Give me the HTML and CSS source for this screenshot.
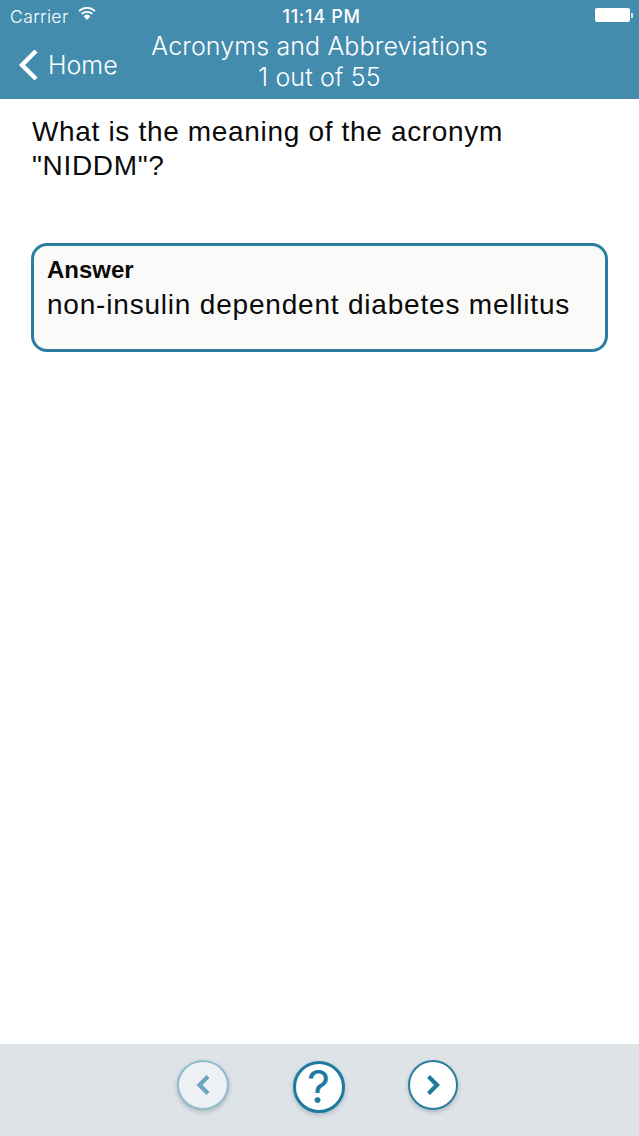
FILE: index.html
```html
<!DOCTYPE html>
<html lang="en">
<head>
<meta charset="utf-8">
<title>Acronyms and Abbreviations</title>
<link rel="stylesheet" href="styles.css">
</head>
<body>
<div class="app">
  <header class="header">
    <div class="status">
      <div class="status-left">
        <span>Carrier</span>
        <svg class="wifi" width="20" height="15" viewBox="0 0 20 14"><path d="M10 13.500 6.600 9.700a5 5 0 0 1 6.800 0Z" fill="#fff"/><path d="M4.600 7.400a8 8 0 0 1 10.800 0M2 4.600a11.800 11.800 0 0 1 16 0" fill="none" stroke="#fff" stroke-width="1.800"/></svg>
      </div>
      <div class="status-time">11:14 PM</div>
      <div class="battery"><span class="battery-body"></span><span class="battery-tip"></span></div>
    </div>
    <nav class="nav">
      <div class="back">
        <svg width="24" height="34" viewBox="0 0 24 34"><path d="M20 3 6 17l14 14" fill="none" stroke="#fff" stroke-width="4.400"/></svg>
        <span>Home</span>
      </div>
      <div class="title">Acronyms and Abbreviations<br>1 out of 55</div>
    </nav>
  </header>
  <main class="content">
    <p class="question">What is the meaning of the acronym "NIDDM"?</p>
    <section class="answer">
      <div class="answer-label">Answer</div>
      <div class="answer-text">non-insulin dependent diabetes mellitus</div>
    </section>
  </main>
  <footer class="toolbar">
    <button class="round prev"><svg width="20" height="24" viewBox="0 0 20 24"><path d="M15 3.500 6.500 12l8.500 8.500" fill="none" stroke="#6aa6bd" stroke-width="4.200"/></svg></button>
    <button class="round help">?</button>
    <button class="round next"><svg width="20" height="24" viewBox="0 0 20 24"><path d="M5.500 3.500 14 12l-8.500 8.500" fill="none" stroke="#1f7aa0" stroke-width="4.200"/></svg></button>
  </footer>
</div>
</body>
</html>
```
FILE: styles.css
```css
* { box-sizing: border-box; }
html, body { margin: 0; padding: 0; }
body { font-family: "Liberation Sans", Arial, sans-serif; background: #fff; }
.app { width: 639px; height: 1136px; display: flex; flex-direction: column; overflow: hidden; }

.header { height: 99px; background: #438cae; color: #fff; font-family: Inter, "Liberation Sans", sans-serif; flex: none; }
.status { height: 32px; display: grid; grid-template-columns: 1fr auto 1fr; align-items: center; padding: 0 6px 0 10px; }
.status-left { display: flex; align-items: center; gap: 8px; font-size: 17.500px; font-weight: 300; letter-spacing: .4px; }
.wifi { margin-top: -5px; }
.status-time { font-weight: 500; font-size: 18px; letter-spacing: .7px; }
.battery { justify-self: end; display: flex; align-items: center; margin-top: -2px; }
.battery-body { width: 35px; height: 14px; background: #fff; border-radius: 2px; }
.battery-tip { width: 2px; height: 5px; background: #d5e6ee; margin-left: 1px; }

.nav { height: 67px; position: relative; display: flex; align-items: flex-start; }
.back { display: flex; align-items: center; gap: 8px; padding: 16px 0 0 16px; font-size: 25px; font-weight: 300; }
.title { position: absolute; left: 0; right: 0; top: -1px; text-align: center; font-size: 25px; line-height: 31px; font-weight: 300; letter-spacing: .12px; }

.content { flex: 1; padding: 16px 31px 0; color: #0a0a0a; }
.question { margin: 0; padding-left: 1px; font-size: 28px; line-height: 34px; width: 520px; letter-spacing: .67px; }
.answer { margin-top: 60px; width: 577px; height: 109px; border: 3px solid #2b7d9f; border-radius: 16px; background: #fafaf8; padding: 10px 13px; }
.answer-label { font-size: 24px; line-height: 27px; font-weight: 700; }
.answer-text { font-size: 28px; line-height: 34px; margin-top: 5px; white-space: nowrap; letter-spacing: .8px; }

.toolbar { height: 92px; flex: none; background: #dde3e7; display: flex; justify-content: center; align-items: flex-start; gap: 64px; padding: 16px 5px 0 0; }
.round { width: 52px; height: 50px; padding: 0; border-radius: 50%; display: flex; align-items: center; justify-content: center; background: #fff; box-shadow: 0 2px 4px rgba(60,80,90,.3); }
.prev { background: #edf1f4; border: 2px solid #8fbccd; }
.help { border: 3px solid #1f7aa0; height: 52px; color: #1f7aa0; font-family: Inter, "Liberation Sans", sans-serif; font-size: 45px; font-weight: 400; line-height: 46px; margin-top: 1px; }
.next { width: 50px; margin-left: -1px; border: 2px solid #2b7d9f; }
```
